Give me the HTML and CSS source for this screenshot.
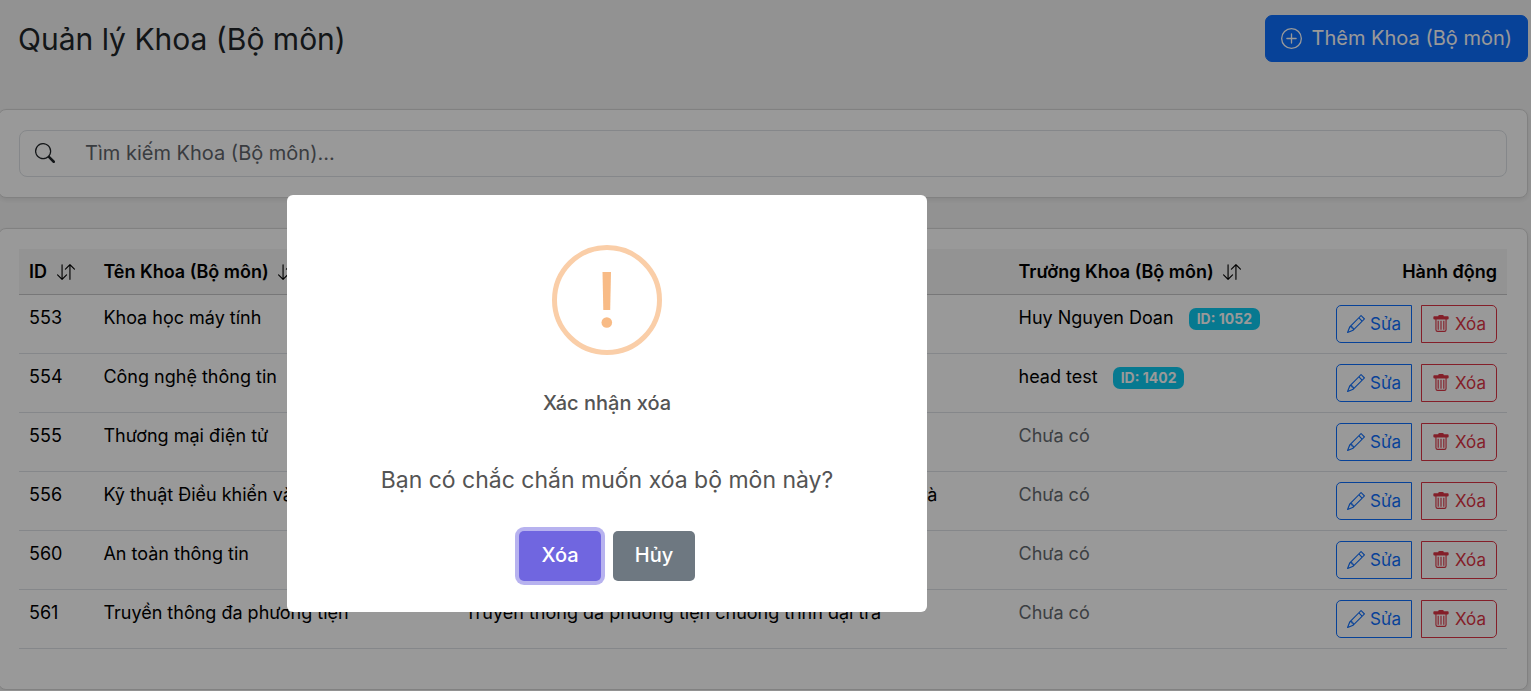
FILE: index.html
```html
<!DOCTYPE html>
<html lang="vi">
<head>
<meta charset="utf-8">
<title>Quản lý Khoa (Bộ môn)</title>
<link rel="stylesheet" href="styles.css">
</head>
<body>
<svg class="sprite" aria-hidden="true">
  <symbol id="plus-circle" viewBox="0 0 16 16"><path d="M8 15A7 7 0 1 1 8 1a7 7 0 0 1 0 14m0 1A8 8 0 1 0 8 0a8 8 0 0 0 0 16"/><path d="M8 4a.5.5 0 0 1 .5.5v3h3a.5.5 0 0 1 0 1h-3v3a.5.5 0 0 1-1 0v-3h-3a.5.5 0 0 1 0-1h3v-3A.5.5 0 0 1 8 4"/></symbol>
  <symbol id="search" viewBox="0 0 16 16"><path d="M11.742 10.344a6.5 6.5 0 1 0-1.397 1.398h-.001q.044.06.098.115l3.85 3.85a1 1 0 0 0 1.415-1.414l-3.85-3.85a1 1 0 0 0-.115-.1zM12 6.5a5.5 5.5 0 1 1-11 0 5.5 5.5 0 0 1 11 0"/></symbol>
  <symbol id="sort" viewBox="0 0 16 16"><path d="M11.5 15a.5.5 0 0 0 .5-.5V2.707l3.146 3.147a.5.5 0 0 0 .708-.708l-4-4a.5.5 0 0 0-.708 0l-4 4a.5.5 0 1 0 .708.708L11 2.707V14.5a.5.5 0 0 0 .5.5m-7-14a.5.5 0 0 1 .5.5v11.793l3.146-3.147a.5.5 0 0 1 .708.708l-4 4a.5.5 0 0 1-.708 0l-4-4a.5.5 0 0 1 .708-.708L4 13.293V1.5a.5.5 0 0 1 .5-.5"/></symbol>
  <symbol id="pencil" viewBox="0 0 16 16"><path d="M12.146.146a.5.5 0 0 1 .708 0l3 3a.5.5 0 0 1 0 .708l-10 10a.5.5 0 0 1-.168.11l-5 2a.5.5 0 0 1-.65-.65l2-5a.5.5 0 0 1 .11-.168zM11.207 2.5 13.5 4.793 14.793 3.5 12.5 1.207zm1.586 3L10.5 3.207 4 9.707V10h.5a.5.5 0 0 1 .5.5v.5h.5a.5.5 0 0 1 .5.5v.5h.293zm-9.761 5.175-.106.106-1.528 3.821 3.821-1.528.106-.106A.5.5 0 0 1 5 12.5V12h-.5a.5.5 0 0 1-.5-.5V11h-.5a.5.5 0 0 1-.468-.325"/></symbol>
  <symbol id="trash" viewBox="0 0 16 16"><path d="M5 5h1v8H5zM7.500 5h1v8h-1zM10 5h1v8h-1z"/><path d="M5.500 1.200A1.200 1.200 0 0 1 6.700 0h2.600a1.200 1.200 0 0 1 1.200 1.200H14a.8.8 0 0 1 .8.8v1a1 1 0 0 1-1 1H13v9a2 2 0 0 1-2 2H5a2 2 0 0 1-2-2V4h-.8a1 1 0 0 1-1-1V2a.8.800 0 0 1 .8-.8zM4 4v9a1 1 0 0 0 1 1h6a1 1 0 0 0 1-1V4z" fill-rule="evenodd"/></symbol>
</svg>

<main class="page">
  <header class="page-header">
    <h1 class="page-title">Quản lý Khoa (Bộ môn)</h1>
    <button class="btn-add" type="button"><svg class="icon-add"><use href="#plus-circle"/></svg>Thêm Khoa (Bộ môn)</button>
  </header>

  <section class="card">
    <div class="search">
      <label class="search-label" for="q" aria-label="Tìm kiếm"><svg class="icon-search"><use href="#search"/></svg></label>
      <input class="search-input" id="q" type="text" placeholder="Tìm kiếm Khoa (Bộ môn)...">
    </div>
  </section>

  <section class="card card-table">
    <table class="table">
      <thead>
        <tr>
          <th class="col-id">ID <svg class="icon-sort"><use href="#sort"/></svg></th>
          <th class="col-name">Tên Khoa (Bộ môn) <svg class="icon-sort"><use href="#sort"/></svg></th>
          <th class="col-desc">Mô tả <svg class="icon-sort"><use href="#sort"/></svg></th>
          <th class="col-head">Trưởng Khoa (Bộ môn) <svg class="icon-sort"><use href="#sort"/></svg></th>
          <th class="col-actions">Hành động</th>
        </tr>
      </thead>
      <tbody>
        <tr>
          <td>553</td><td>Khoa học máy tính</td><td>Khoa học máy tính</td>
          <td>Huy Nguyen Doan <span class="badge">ID: 1052</span></td>
          <td><div class="actions"><button class="btn btn-edit" type="button"><svg class="icon"><use href="#pencil"/></svg>Sửa</button><button class="btn btn-delete" type="button"><svg class="icon"><use href="#trash"/></svg>Xóa</button></div></td>
        </tr>
        <tr>
          <td>554</td><td>Công nghệ thông tin</td><td>Công nghệ thông tin</td>
          <td>head test <span class="badge">ID: 1402</span></td>
          <td><div class="actions"><button class="btn btn-edit" type="button"><svg class="icon"><use href="#pencil"/></svg>Sửa</button><button class="btn btn-delete" type="button"><svg class="icon"><use href="#trash"/></svg>Xóa</button></div></td>
        </tr>
        <tr>
          <td>555</td><td>Thương mại điện tử</td><td>Thương mại điện tử</td>
          <td class="muted">Chưa có</td>
          <td><div class="actions"><button class="btn btn-edit" type="button"><svg class="icon"><use href="#pencil"/></svg>Sửa</button><button class="btn btn-delete" type="button"><svg class="icon"><use href="#trash"/></svg>Xóa</button></div></td>
        </tr>
        <tr>
          <td>556</td><td>Kỹ thuật Điều khiển và Tự động hóa</td><td>Kỹ thuật Điều khiển và Tự động hóa chương trình đại trà</td>
          <td class="muted">Chưa có</td>
          <td><div class="actions"><button class="btn btn-edit" type="button"><svg class="icon"><use href="#pencil"/></svg>Sửa</button><button class="btn btn-delete" type="button"><svg class="icon"><use href="#trash"/></svg>Xóa</button></div></td>
        </tr>
        <tr>
          <td>560</td><td>An toàn thông tin</td><td>An toàn thông tin</td>
          <td class="muted">Chưa có</td>
          <td><div class="actions"><button class="btn btn-edit" type="button"><svg class="icon"><use href="#pencil"/></svg>Sửa</button><button class="btn btn-delete" type="button"><svg class="icon"><use href="#trash"/></svg>Xóa</button></div></td>
        </tr>
        <tr>
          <td>561</td><td>Truyền thông đa phương tiện</td><td>Truyền thông đa phương tiện chương trình đại trà</td>
          <td class="muted">Chưa có</td>
          <td><div class="actions"><button class="btn btn-edit" type="button"><svg class="icon"><use href="#pencil"/></svg>Sửa</button><button class="btn btn-delete" type="button"><svg class="icon"><use href="#trash"/></svg>Xóa</button></div></td>
        </tr>
      </tbody>
    </table>
  </section>
</main>

<div class="overlay">
  <div class="dialog" role="dialog" aria-modal="true" aria-labelledby="dialog-title">
    <svg class="dialog-icon" viewBox="0 0 110 110" aria-hidden="true">
      <circle cx="55" cy="55" r="52.500" fill="none" stroke="#facea8" stroke-width="5"/>
      <path d="M50.500 27h8.500l-.8 38h-6.900z" fill="#f8bb86"/>
      <circle cx="54.800" cy="77.500" r="5.300" fill="#f8bb86"/>
    </svg>
    <h2 class="dialog-title" id="dialog-title">Xác nhận xóa</h2>
    <p class="dialog-text">Bạn có chắc chắn muốn xóa bộ môn này?</p>
    <div class="dialog-actions">
      <button class="dialog-btn dialog-confirm" type="button">Xóa</button>
      <button class="dialog-btn dialog-cancel" type="button">Hủy</button>
    </div>
  </div>
</div>
</body>
</html>
```

FILE: styles.css
```css
* { box-sizing: border-box; }

body {
  margin: 0;
  background: #f4f4f4;
  color: #212529;
  font-family: Inter, "Liberation Sans", sans-serif;
  font-size: 20px;
  line-height: 30px;
  overflow: hidden;
}

svg { fill: currentColor; flex: none; }
button, input { font: inherit; }
.sprite { display: none; }

.page {
  display: flex;
  flex-direction: column;
  gap: 30px;
  margin: 15px 3px 0 -2px;
}

.page-header {
  display: flex;
  justify-content: space-between;
  align-items: center;
  padding: 0 0 17px 20px;
}

.page-title {
  margin: 0;
  font-size: 30px;
  font-weight: 400;
  line-height: 36px;
}

.btn-add {
  display: flex;
  align-items: center;
  gap: 10px;
  padding: 8px 15px;
  border: 1px solid #0d6efd;
  border-radius: 7px;
  background: #0d6efd;
  color: #fff;
  line-height: 29px;
}

.icon-add { width: 21px; height: 21px; }

.card {
  padding: 20px;
  border: 1px solid #d8d8d8;
  border-radius: 8px;
  background: #fff;
  box-shadow: 0 2px 5px rgba(0, 0, 0, 0.08);
}

.card-table { padding-bottom: 40px; }

.search {
  display: flex;
  align-items: center;
  padding-bottom: 2px;
  border: 1px solid #dee2e6;
  border-radius: 8px;
}

.search-label { display: flex; padding: 0 15px; }
.icon-search { width: 20px; height: 20px; }

.search-input {
  flex: 1;
  min-width: 0;
  height: 43px;
  padding: 0 15px;
  border: 0;
  background: transparent;
  color: #212529;
  outline: 0;
}

.search-input::placeholder { color: #5f656b; opacity: 1; }

.table {
  width: 100%;
  table-layout: fixed;
  border-collapse: separate;
  border-spacing: 0;
  color: #000;
  font-size: 18px;
  line-height: 26px;
}

.table th {
  padding: 10px 10px 9px;
  border-bottom: 1px solid #c6c7c8;
  background: #f5f5f5;
  font-weight: 600;
  text-align: left;
  white-space: nowrap;
}

.table td {
  padding: 10px;
  border-bottom: 1px solid #dee2e6;
  text-align: left;
  vertical-align: top;
  white-space: nowrap;
}

.col-id { width: 5%; }
.col-name { width: 24.3%; }
.col-desc { width: 37.2%; }
.col-head { width: 20%; }
.table .col-actions { text-align: right; }
.table .muted { color: #656a6f; }

.icon-sort {
  width: 18px;
  height: 18px;
  margin-left: 5px;
  vertical-align: -3px;
}

.badge {
  display: inline-block;
  margin-left: 10px;
  padding: 4px 8px;
  border-radius: 7px;
  background: #0dcaf0;
  color: #fff;
  font-size: 14px;
  font-weight: 700;
  line-height: 14px;
}

.actions { display: flex; justify-content: flex-end; gap: 9px; }

.btn {
  display: flex;
  align-items: center;
  justify-content: center;
  gap: 5px;
  width: 76px;
  height: 38px;
  padding: 0;
  border: 1px solid currentColor;
  background: transparent;
  font-size: 17px;
}

.btn-edit { border-radius: 5px 0 0 5px; color: #0d6efd; }
.btn-delete { border-radius: 0 5px 5px 0; color: #dc3545; }
.icon { width: 18px; height: 18px; }

.overlay {
  position: fixed;
  inset: 0;
  display: grid;
  place-items: center;
  padding: 116px 317px 0 0;
  background: rgba(0, 0, 0, 0.4);
}

.dialog {
  display: flex;
  flex-direction: column;
  align-items: center;
  width: 640px;
  padding: 50px 20px 31px;
  border-radius: 6px;
  background: #fff;
  color: #545454;
}

.dialog-icon { width: 110px; height: 110px; }

.dialog-title {
  margin: 33px 0 0;
  font-size: 20px;
  font-weight: 500;
  line-height: 30px;
}

.dialog-text {
  margin: 45px 0 0;
  font-size: 23px;
  line-height: 34px;
}

.dialog-actions { display: flex; gap: 12px; margin-top: 34px; }

.dialog-btn {
  min-width: 82px;
  height: 50px;
  padding: 0 20px 2px;
  border: 0;
  border-radius: 5px;
  color: #fff;
  font-weight: 500;
}

.dialog-confirm { background: #7066e0; box-shadow: 0 0 0 4px rgba(112, 102, 224, 0.5); }
.dialog-cancel { background: #6e7881; }
```
